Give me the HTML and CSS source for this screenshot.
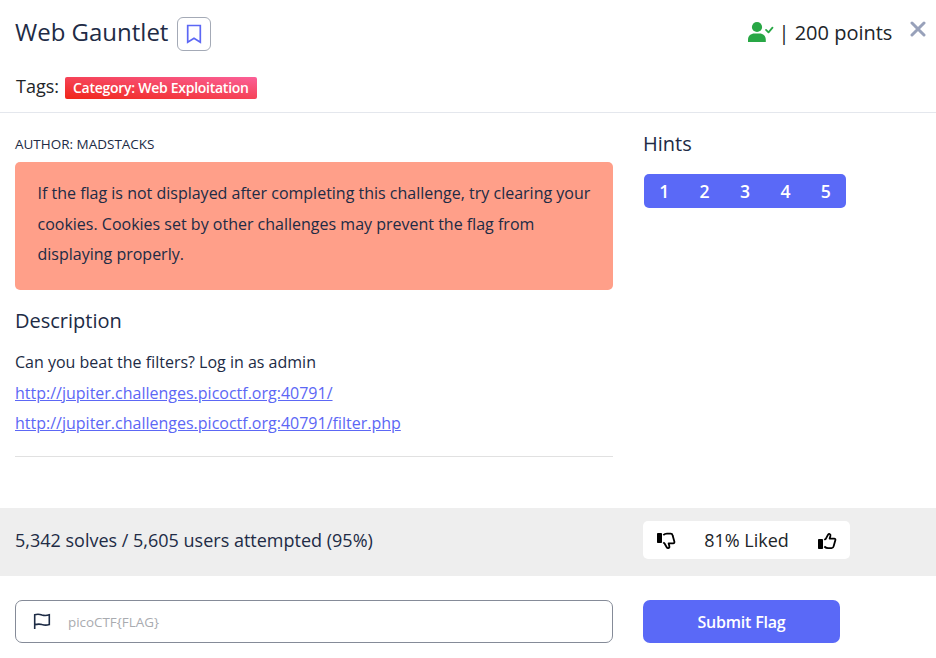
FILE: index.html
```html
<!DOCTYPE html>
<html lang="en">
<head>
<meta charset="utf-8">
<title>Web Gauntlet</title>
<link rel="stylesheet" href="styles.css">
</head>
<body>
<header class="header">
  <div class="title-row">
    <h1 class="title">Web Gauntlet</h1>
    <button class="bookmark" aria-label="Bookmark"><svg width="16" height="20" viewBox="0 0 16 20"><path d="M1.700 1.500h12.600v16.700L8 14.300l-6.300 3.900z" fill="none" stroke="#5c67f5" stroke-width="1.700"/></svg></button>
    <div class="points">
      <svg class="solved" width="26" height="22" viewBox="0 0 26 22"><circle cx="9" cy="6" r="5.100" fill="#28a745"/><path d="M0 21v-2.200C0 14.800 3 12.600 6.500 12.600h5c3.500 0 6.300 2.200 6.300 6.200V21z" fill="#28a745"/><path d="M18 8.900l2.500 2.500 4-4.700" fill="none" stroke="#28a745" stroke-width="1.800" stroke-linecap="round" stroke-linejoin="round"/></svg>
      <span>| 200 points</span>
    </div>
    <button class="close" aria-label="Close"><svg width="16" height="16" viewBox="0 0 16 16"><path d="M2 2l12 12M14 2L2 14" stroke="#98a1ba" stroke-width="3" stroke-linecap="round"/></svg></button>
  </div>
  <div class="tags"><span>Tags:</span><span class="tag">Category: Web Exploitation</span></div>
</header>
<main class="content">
  <section class="details">
    <div class="author">AUTHOR: MADSTACKS</div>
    <div class="notice">If the flag is not displayed after completing this challenge, try clearing your cookies. Cookies set by other challenges may prevent the flag from displaying properly.</div>
    <h2 class="heading">Description</h2>
    <div class="description">Can you beat the filters? Log in as admin<br><a href="#">http://jupiter.challenges.picoctf.org:40791/</a><br><a href="#">http://jupiter.challenges.picoctf.org:40791/filter.php</a></div>
  </section>
  <aside class="hints">
    <h2 class="heading">Hints</h2>
    <div class="hint-group"><button>1</button><button>2</button><button>3</button><button>4</button><button>5</button></div>
  </aside>
</main>
<section class="stats">
  <div class="solves">5,342 solves / 5,605 users attempted (95%)</div>
  <div class="rating">
    <svg width="20" height="18" viewBox="0 0 20 18"><rect x="1" y="1" width="5" height="10" rx=".8"/><path d="M7.300 3.200C8.500 1.900 9.600 1.600 11 1.600h3.600c1.100 0 1.800.6 2 1.700l1.800 6.500c.2.900-.3 1.500-1.200 1.500h-4.600l.7 2.600c.3 1.300-.2 2-.9 2.200-.7.200-1.300-.1-1.700-.8L8.700 11.700 7.300 10.300" fill="none" stroke="#000" stroke-width="1.800" stroke-linejoin="round"/></svg>
    <span>81% Liked</span>
    <svg width="20" height="18" viewBox="0 0 20 18"><rect x="1" y="7" width="5" height="10" rx=".8"/><path d="M7.300 7.900l1.600-1.200 2-3.800c.5-.8 1.100-1.100 1.800-.9.700.3 1 1 .7 2l-.8 2.600h4.600c.9 0 1.400.6 1.200 1.500l-1.700 6c-.3 1.200-.9 2-2.100 2H11c-1.400 0-2.500-.5-3.700-1.600" fill="none" stroke="#000" stroke-width="1.800" stroke-linejoin="round"/></svg>
  </div>
</section>
<form class="submission">
  <label class="flag-field">
    <svg width="18" height="17" viewBox="0 0 18 17"><path d="M1.700 16V1.800C5 .6 6.800 1.200 9 2c2.500.8 4.700.7 7.300-.2v9.800c-2.600.8-4.800.8-7.300 0-2.300-.8-4.300-.8-7.300.2" fill="none" stroke="#1d2b45" stroke-width="1.600"/></svg>
    <input type="text" placeholder="picoCTF{FLAG}">
  </label>
  <button class="submit" type="button">Submit Flag</button>
</form>
</body>
</html>
```
FILE: styles.css
```css
* { box-sizing: border-box; }
body {
  margin: 0;
  background: #fff;
  color: #212b45;
  font-family: "Open Sans", "Noto Sans", sans-serif;
  font-size: 16px;
}
button { font-family: inherit; margin: 0; padding: 0; border: 0; background: none; }
svg { display: block; }
.header { height: 113px; border-bottom: 1px solid #e4e7ed; padding: 15px 9.6px 0 15px; }
.title-row { display: flex; align-items: flex-start; height: 59px; }
.title { margin: 0 9px 0 0; font-size: 24px; font-weight: 400; line-height: 34px; }
.bookmark {
  display: flex; align-items: center; justify-content: center;
  width: 34px; height: 34px; margin-top: 2px;
  border: 1px solid #a4aab6; border-radius: 6px;
}
.points { display: flex; align-items: center; margin-left: auto; height: 34px; font-size: 20px; color: #212529; gap: 4px; }
.close { margin: 6px 0 0 18px; }
.tags { display: flex; align-items: center; gap: 6px; height: 24px; padding-left: 1px; font-size: 18px; color: #212529; }
.tag {
  height: 22px; margin-top: 4px; padding: 0 8px; border-radius: 2px;
  background: linear-gradient(to top right, #f02618, #fb6098);
  color: #fff; font-size: 14px; font-weight: 600; letter-spacing: -.27px; line-height: 22px;
}
.content { display: grid; grid-template-columns: 598px 1fr; gap: 30px; height: 395px; padding: 0 15px; }
.author { padding-top: 22px; height: 49px; font-size: 13.49px; line-height: 19px; }
.notice { height: 128px; padding: 16.4px 22.5px; border-radius: 5px; background: #ff9f89; line-height: 30.4px; }
.heading { margin: 0; font-size: 20px; font-weight: 400; line-height: 28px; }
.details .heading { margin-top: 17px; }
.description { height: 122px; padding-top: 12.4px; border-bottom: 1px solid #e1e1e1; line-height: 30.4px; }
.description a { color: #5c67f5; }
.hints { padding-top: 17px; }
.hint-group { display: flex; width: 202px; height: 34px; margin: 16px 0 0 1px; border-radius: 5px; background: #5a69f7; }
.hint-group button { flex: 1; color: #fff; font-size: 17.6px; font-weight: 600; }
.stats { display: grid; grid-template-columns: 598px 207px; gap: 30px; align-items: center; height: 68px; padding: 0 15px 4px; background: #eee; font-size: 18px; }
.rating { display: flex; align-items: center; justify-content: space-between; height: 38px; padding: 0 13px; border-radius: 5px; background: #fff; color: #212529; }
.rating svg { position: relative; top: 1px; }
.submission { display: grid; grid-template-columns: 598px 197px; gap: 30px; padding: 24px 15px 0; margin: 0; }
.flag-field { display: flex; align-items: center; height: 43px; padding-left: 17px; gap: 17px; border: 1px solid #858b98; border-radius: 7px; }
.flag-field input { flex: 1; padding: 0; border: 0; outline: 0; background: none; font: 13.4px "Open Sans", "Noto Sans", sans-serif; }
.flag-field input::placeholder { color: #a9abb0; opacity: 1; }
.submit { height: 43px; border-radius: 7px; background: #5a69f7; color: #fff; font-size: 16px; font-weight: 600; letter-spacing: -.2px; }
```
